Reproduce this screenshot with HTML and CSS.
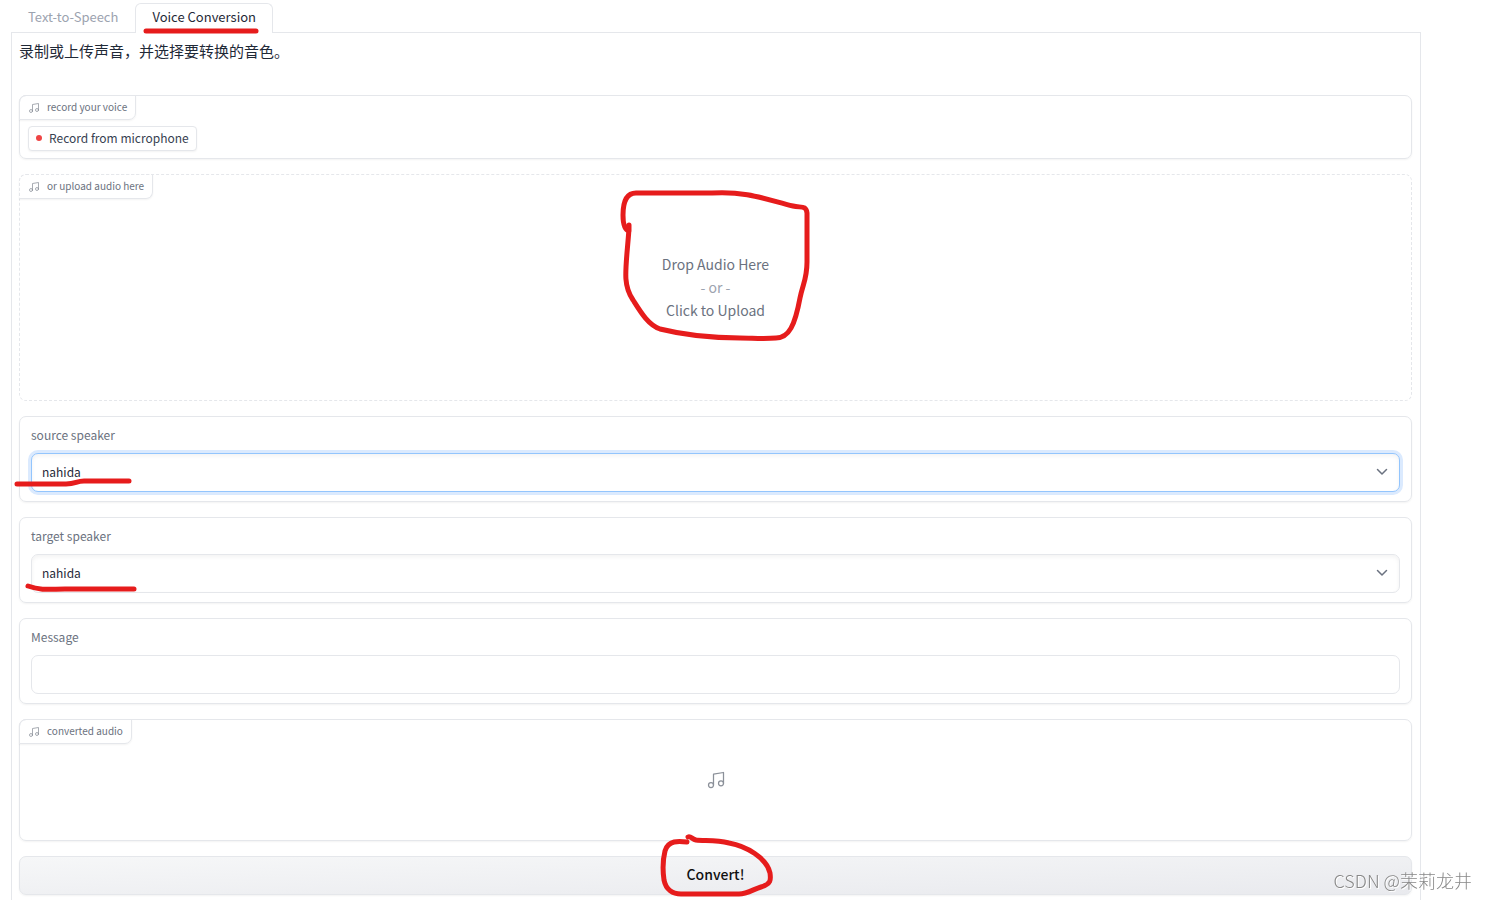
FILE: index.html
```html
<!DOCTYPE html>
<html lang="zh-CN">
<head>
    <meta charset="UTF-8">
    <title>Voice Conversion</title>
    <link rel="stylesheet" href="styles.css">
</head>
<body>
    <svg class="sprite" aria-hidden="true">
        <symbol id="music" viewBox="0 0 24 24">
            <path d="M9 18V5l12-2v13"/>
            <circle cx="6" cy="18" r="3"/>
            <circle cx="18" cy="16" r="3"/>
        </symbol>
        <symbol id="chevron" viewBox="0 0 12 8">
            <path d="M1.5 1.5L6 6l4.5-4.5"/>
        </symbol>
    </svg>
    <main class="app">
        <nav class="tabs">
            <button class="tab" type="button">Text-to-Speech</button>
            <button class="tab active" type="button">Voice Conversion
                <svg class="mark mark-tab" viewBox="0 0 116 6"><path d="M3 3H113"/></svg>
            </button>
        </nav>
        <div class="panel">
            <p class="intro">录制或上传声音，并选择要转换的音色。</p>

            <section class="block record">
                <div class="block-label"><svg><use href="#music"/></svg>record your voice</div>
                <button class="record-btn" type="button"><span class="dot"></span>Record from microphone</button>
            </section>

            <section class="block upload">
                <div class="block-label"><svg><use href="#music"/></svg>or upload audio here</div>
                <button class="drop" type="button">
                    <span>Drop Audio Here</span>
                    <span class="or">- or -</span>
                    <span>Click to Upload</span>
                </button>
                <svg class="mark mark-drop" viewBox="0 0 192 154">
                    <path d="M9 36V42C5 41 3 36 3 26C3 13 6 4 16 4H92C126 2 145 10 173 17C181 19 186 16 187 24V73C187 90 183 94 180 109C175 136 169 149 156 149C144 150 132 149 120 149C90 149 60 145 40 140C28 136 20 122 13 111C2 95 6 80 9 40"/>
                </svg>
            </section>

            <section class="block field">
                <label for="source">source speaker</label>
                <div class="select-wrap">
                    <select id="source" class="control focused"><option>nahida</option></select>
                    <svg class="chevron"><use href="#chevron"/></svg>
                </div>
                <svg class="mark mark-source" viewBox="0 0 118 10"><path d="M3 7H52C62 7 62 4 70 4H115"/></svg>
            </section>

            <section class="block field">
                <label for="target">target speaker</label>
                <div class="select-wrap">
                    <select id="target" class="control"><option>nahida</option></select>
                    <svg class="chevron"><use href="#chevron"/></svg>
                </div>
                <svg class="mark mark-target" viewBox="0 0 112 10"><path d="M3 3C17 8 26 6 40 6H109"/></svg>
            </section>

            <section class="block field">
                <label for="message">Message</label>
                <input id="message" class="control plain" type="text">
            </section>

            <section class="block output">
                <div class="block-label"><svg><use href="#music"/></svg>converted audio</div>
                <svg class="empty"><use href="#music"/></svg>
            </section>

            <button class="convert" type="button">Convert!
                <svg class="mark mark-convert" viewBox="0 0 114 64">
                    <path d="M28 8C20 7 9 6 6 17C3 29 4 39 5 46C7 56 14 60 22 60H80C88 60 95 55 102 53C112 50 112 46 111 39C108 24 87 12 70 9C57 6 45 7 37 6C33 5 32 2 29 3"/>
                </svg>
            </button>
        </div>
    </main>
    <div class="watermark">CSDN @茉莉龙井</div>
</body>
</html>
```

FILE: styles.css
```css
* { box-sizing: border-box; }
body { margin: 0; background: #fff; color: #1f2937; font-family: "Noto Sans CJK SC", "Noto Sans", sans-serif; font-size: 12px; }
button, input, select { font: inherit; color: inherit; }
button { cursor: pointer; }
.sprite { display: none; }
svg { fill: none; stroke: currentColor; stroke-width: 1.5; stroke-linecap: round; stroke-linejoin: round; }

.app { min-height: 100vh; padding: 3px 66px 0 11px; display: flex; flex-direction: column; }
.tabs { display: flex; margin-bottom: -1px; }
.tab { position: relative; height: 30px; padding: 0 16px 3px; border: 1px solid transparent; border-bottom: none; border-radius: 6px 6px 0 0; background: none; color: #9ca3af; font-size: 13px; line-height: 20px; }
.tab.active { background: #fff; border-color: #e5e7eb; color: #1f2937; }
.panel { flex: 1; display: flex; flex-direction: column; gap: 15px; padding: 7px 8px 5px 7px; border: 1px solid #e5e7eb; border-bottom: none; }
.intro { margin: 0 0 18px; height: 22px; font-size: 15px; line-height: 22px; }

.block { position: relative; border: 1px solid #e5e7eb; border-radius: 7px; box-shadow: 0 1px 2px rgba(0, 0, 0, 0.05); }
.block-label { position: absolute; top: -1px; left: -1px; display: flex; align-items: center; gap: 7px; height: 25px; padding: 0 8px 2px; border: 1px solid #e5e7eb; border-radius: 7px 0 7px 0; box-shadow: 0 1px 2px rgba(0, 0, 0, 0.05); color: #6b7280; font-size: 10px; line-height: 16px; }
.block-label svg { width: 12px; height: 12px; margin-top: 2px; color: #8b9099; }

.record { padding: 30px 8px 7px; }
.record-btn { display: flex; align-items: center; gap: 7px; height: 25px; padding: 0 7px 1px; border: 1px solid #e5e7eb; border-radius: 4px; background: #fff; box-shadow: 0 1px 2px rgba(0, 0, 0, 0.05); color: #374151; line-height: 16px; }
.dot { width: 6px; height: 6px; border-radius: 50%; background: #ef4444; }

.upload { border-style: dashed; box-shadow: none; }
.upload .block-label { border-top-style: dashed; border-left-style: dashed; }
.drop { display: flex; flex-direction: column; align-items: center; justify-content: center; width: 100%; height: 225px; padding: 0; border: none; background: none; color: #6b7280; font-size: 14px; line-height: 23px; }
.or { color: #9ca3af; }

.field { padding: 9px 11px 9px; }
.field label { display: block; margin-bottom: 9px; color: #6b7280; font-size: 12px; line-height: 18px; }
.select-wrap { position: relative; }
.control { display: block; width: 100%; height: 39px; padding: 0 10px 3px; border: 1px solid #e5e7eb; border-radius: 7px; background: #fff; box-shadow: inset 0 2px 4px rgba(0, 0, 0, 0.05); font-size: 12px; appearance: none; outline: none; }
.control.focused, .control:focus { border-color: #93c5fd; box-shadow: 0 0 0 3px #dbeafe, inset 0 2px 4px rgba(0, 0, 0, 0.05); }
.control.plain { box-shadow: none; }
.chevron { position: absolute; top: 15px; right: 12px; width: 12px; height: 8px; color: #6b7280; pointer-events: none; }

.output { display: flex; align-items: center; justify-content: center; height: 122px; }
.empty { width: 20px; height: 20px; color: #8b9099; }
.convert { position: relative; height: 39px; padding: 0 0 3px; border: 1px solid #e5e7eb; border-radius: 7px; background: linear-gradient(to bottom right, #f6f7f8, #e9eaee); box-shadow: 0 1px 2px rgba(0, 0, 0, 0.05); color: #111; font-size: 14px; font-weight: 500; }

/* hand-drawn highlights */
.mark { position: absolute; z-index: 2; color: #e61c1c; stroke-width: 5; overflow: visible; pointer-events: none; }
.mark-tab { left: 7px; top: 24px; width: 116px; height: 6px; }
.mark-drop { left: calc(50% - 96px); top: 14px; width: 192px; height: 154px; }
.mark-source { left: -6px; top: 60px; width: 118px; height: 10px; }
.mark-target { left: 5px; top: 65px; width: 112px; height: 10px; }
.mark-convert { left: calc(50% - 57px); top: -23px; width: 114px; height: 64px; }

.watermark { position: fixed; right: 15px; bottom: 7px; color: #888; text-shadow: 1px 1px 0 #fff; font-size: 18px; font-weight: 300; line-height: 26px; }
```
